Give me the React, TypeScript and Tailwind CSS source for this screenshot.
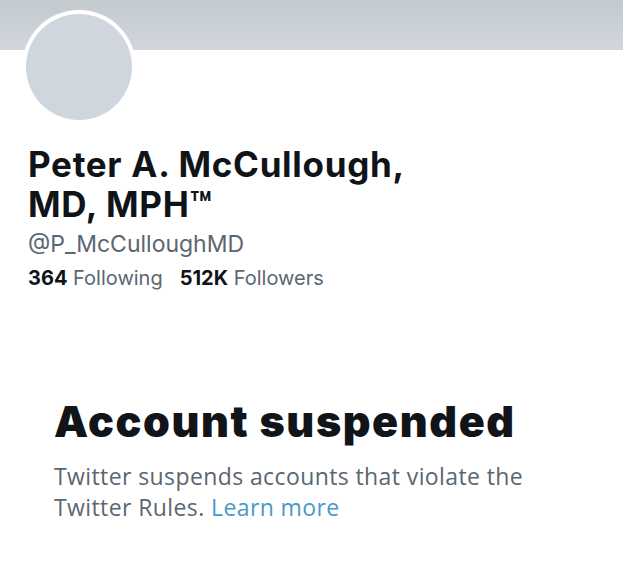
export default function App() {
  return (
    <div className="min-h-[566px] w-full bg-white font-['Inter',sans-serif] text-[#0f1419]">
      <div className="h-[50px] w-full bg-gradient-to-b from-[#c3cacf] to-[#d1d7dc]" />
      <div className="pl-[22px] -mt-[40px]">
        <div className="h-[114px] w-[114px] rounded-full bg-white p-[4px]">
          <div className="h-full w-full rounded-full bg-[#cfd6dd]" />
        </div>
      </div>

      <div className="pl-[28px] pt-[20px]">
        <h1 className="text-[35px] font-bold leading-[40px] tracking-[0.7px]">
          Peter A. McCullough,
          <br />
          MD, MPH™
        </h1>
        <div className="mt-[5px] text-[23px] leading-[30px] text-[#5b6670]">@P_McCulloughMD</div>
        <div className="mt-[6px] flex gap-[17px] text-[20px] leading-[26px] text-[#5b6670]">
          <span>
            <span className="font-bold text-[#0f1419]">364</span> Following
          </span>
          <span>
            <span className="font-bold text-[#0f1419]">512K</span> Followers
          </span>
        </div>
      </div>

      <div className="pl-[54px] pt-[105px]">
        <h2 className="text-[43px] font-black leading-[50px] tracking-[1.6px] text-[#111418]">
          Account suspended
        </h2>
        <p className="mt-[15px] w-[540px] font-['Open_Sans',sans-serif] text-[23px] leading-[31px] tracking-[0.4px] text-[#5b6670]">
          Twitter suspends accounts that violate the
          <br />
          Twitter Rules. <span className="text-[#4a98c9]">Learn more</span>
        </p>
      </div>
    </div>
  );
}
